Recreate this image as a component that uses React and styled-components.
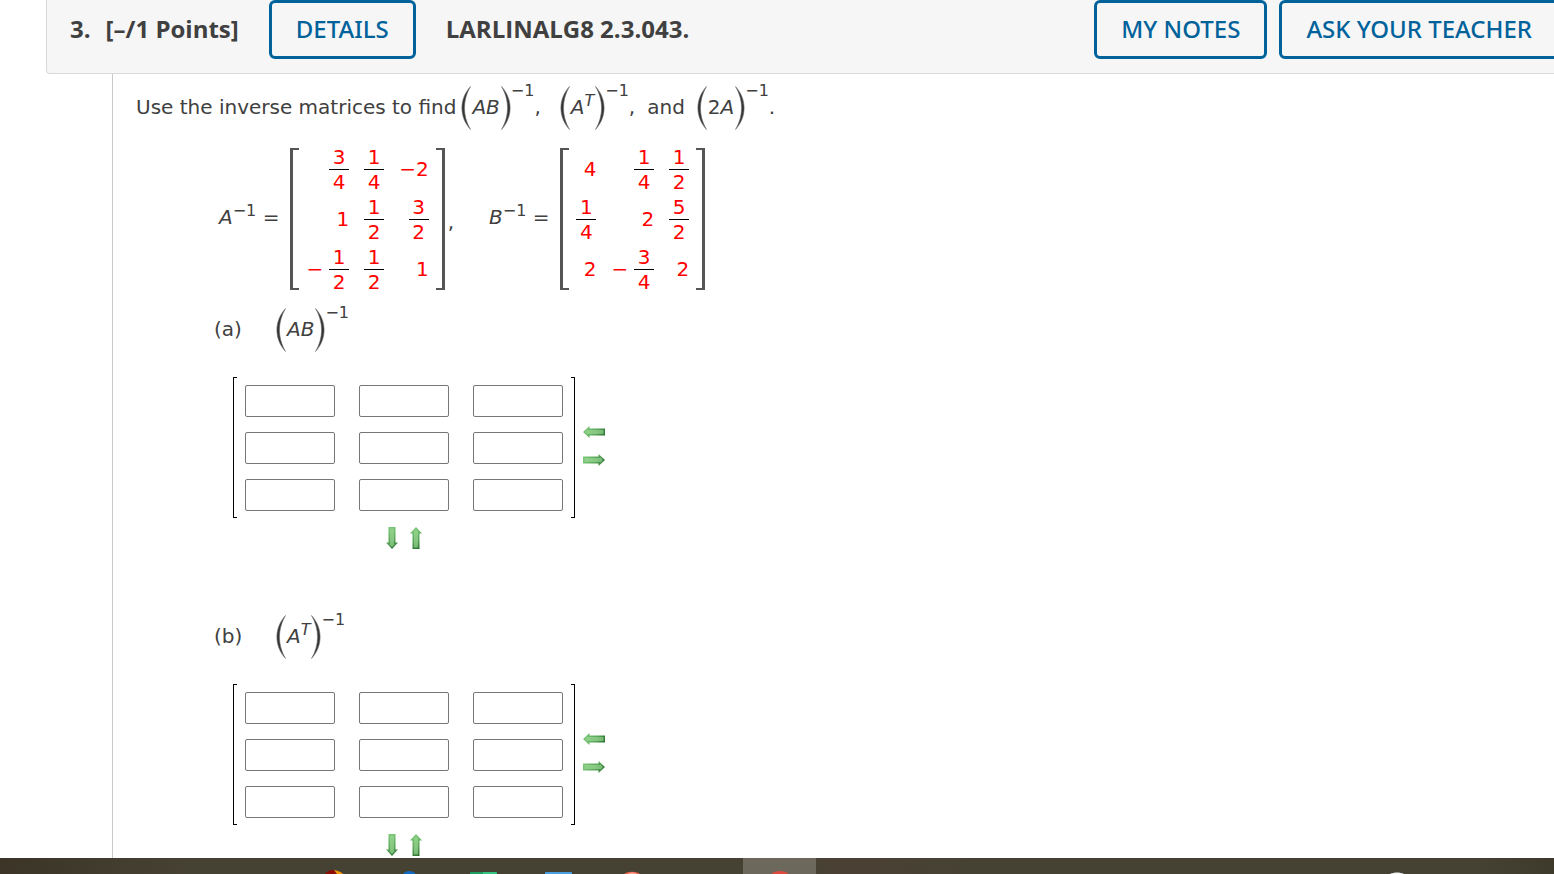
import React from 'react'
import styled, { createGlobalStyle } from 'styled-components'

const matrixA = [
  [['3', '4'], ['1', '4'], '−2'],
  ['1', ['1', '2'], ['3', '2']],
  [['1', '2', '−'], ['1', '2'], '1'],
]

const matrixB = [
  ['4', ['1', '4'], ['1', '2']],
  [['1', '4'], '2', ['5', '2']],
  ['2', ['3', '4', '−'], '2'],
]

const Paren = ({ right }) => (
  <ParenSvg viewBox="0 0 10 44" aria-hidden="true">
    <path
      d={right ? 'M0.5 0.5C12 13 12 31 0.5 43.5C8.5 30 8.5 14 0.5 0.5Z' : 'M9.5 0.5C-2 13 -2 31 9.5 43.5C1.5 30 1.5 14 9.5 0.5Z'}
      fill="#333"
      stroke="#777"
      strokeWidth="0.6"
    />
  </ParenSvg>
)

const Inverse = ({ children }) => (
  <Group>
    <Paren />
    <Inner>{children}</Inner>
    <Paren right />
    <Power>−1</Power>
  </Group>
)

const Cell = ({ value }) => {
  if (!Array.isArray(value)) {
    return <td>{value}</td>
  }
  const [top, bottom, sign] = value
  return (
    <td>
      <Signed>
        {sign && <span>{sign}</span>}
        <Fraction>
          <span>{top}</span>
          <span>{bottom}</span>
        </Fraction>
      </Signed>
    </td>
  )
}

const Matrix = ({ rows }) => (
  <Bracket>
    <MatrixTable>
      <tbody>
        {rows.map((row, i) => (
          <tr key={i}>
            {row.map((value, j) => (
              <Cell key={j} value={value} />
            ))}
          </tr>
        ))}
      </tbody>
    </MatrixTable>
  </Bracket>
)

// the arrow is drawn on its own for each axis so the shading always runs top left to bottom right
const arrowTurns = { left: 180, right: 0, down: 90, up: 270 }

const Arrow = ({ dir, label }) => {
  const vertical = dir === 'up' || dir === 'down'
  const flipped = dir === 'up' || dir === 'left'
  const id = `arrow-${dir}`
  const sign = flipped ? -1 : 1
  return (
    <ArrowButton type="button" aria-label={label} $vertical={vertical}>
      <svg viewBox={vertical ? '-6 -11 12 22' : '-11 -6 22 12'}>
        <defs>
          <linearGradient
            id={id}
            gradientUnits="userSpaceOnUse"
            x1={-11 * sign}
            y1={vertical ? 5 * sign : -5 * sign}
            x2={11 * sign}
            y2={vertical ? -5 * sign : 5 * sign}
          >
            <stop offset="0" stopColor="#7fcb7c" />
            <stop offset="0.6" stopColor="#5aa658" />
            <stop offset="1" stopColor="#256b2a" />
          </linearGradient>
        </defs>
        <g transform={`rotate(${arrowTurns[dir]})`}>
          <path d="M-11 -3.5H4.5V-6L11 0L4.5 6V3.5H-11Z" fill={`url(#${id})`} />
          <path d="M-9.5 -2H6V-3L9 0L6 3V2H-9.5Z" fill="#a2dc9c" opacity="0.6" />
        </g>
      </svg>
    </ArrowButton>
  )
}

const AnswerMatrix = ({ part }) => (
  <Answer>
    <InputGrid>
      {Array.from({ length: 9 }, (_, i) => (
        <Entry
          key={i}
          type="text"
          aria-label={`Part ${part}, row ${Math.floor(i / 3) + 1}, column ${(i % 3) + 1}`}
        />
      ))}
    </InputGrid>
    <ColumnArrows>
      <Arrow dir="left" label="Remove column" />
      <Arrow dir="right" label="Add column" />
    </ColumnArrows>
    <RowArrows>
      <Arrow dir="down" label="Add row" />
      <Arrow dir="up" label="Remove row" />
    </RowArrows>
  </Answer>
)

const App = () => {
  return (
    <Page>
      <GlobalStyle />
      <Content>
        <Header>
          <Title>
            <span>3.</span>
            <span>[–/1 Points]</span>
          </Title>
          <OutlineButton type="button">DETAILS</OutlineButton>
          <Code>LARLINALG8 2.3.043.</Code>
          <Actions>
            <OutlineButton type="button">MY NOTES</OutlineButton>
            <OutlineButton type="button">ASK YOUR TEACHER</OutlineButton>
          </Actions>
        </Header>
        <Question>
          <Statement>
            <Lead>Use the inverse matrices to find</Lead>
            <Inverse><i>AB</i></Inverse>
            <Comma>,</Comma>
            <Inverse><i>A<SmallSup>T</SmallSup></i></Inverse>
            <Comma>,</Comma>
            <And>and</And>
            <Inverse>2<i>A</i></Inverse>
            <span>.</span>
          </Statement>
          <Given>
            <Name><i>A</i><SmallSup>−1</SmallSup> =</Name>
            <Matrix rows={matrixA} />
            <GivenComma>,</GivenComma>
            <Name><i>B</i><SmallSup>−1</SmallSup> =</Name>
            <Matrix rows={matrixB} />
          </Given>
          <Part>
            <PartLine>
              <PartName>(a)</PartName>
              <Inverse><i>AB</i></Inverse>
            </PartLine>
            <AnswerMatrix part="a" />
          </Part>
          <Part>
            <PartLine>
              <PartName>(b)</PartName>
              <Inverse><i>A<SmallSup>T</SmallSup></i></Inverse>
            </PartLine>
            <AnswerMatrix part="b" />
          </Part>
        </Question>
      </Content>
      <Taskbar>
        <Tile>
          <svg viewBox="0 0 32 4">
            <path d="M5 4C8 0 12 0 14 0L17 4Z" fill="#8c0d05" />
            <path d="M14 0C19 1 21 2 23 4H17Z" fill="#f49a12" />
          </svg>
        </Tile>
        <Tile>
          <svg viewBox="0 0 32 4"><path d="M9 4C12 0 18 0 22 4Z" fill="#0f6cc2" /></svg>
        </Tile>
        <Tile>
          <svg viewBox="0 0 32 4">
            <path d="M2 3Q2 2 3 2H15V4H2Z" fill="#1f9e62" />
            <path d="M15 2H28Q29 2 29 3V4H15Z" fill="#35c481" />
          </svg>
        </Tile>
        <Tile>
          <svg viewBox="0 0 32 4"><path d="M3 3Q3 2 4 2H29Q30 2 30 3V4H3Z" fill="#4a9fe0" /></svg>
        </Tile>
        <Tile>
          <svg viewBox="0 0 32 4">
            <path d="M8 4C12 1 20 1 24 4Z" fill="#f0624d" />
            <path d="M12 4C14 2 19 2 21 4Z" fill="#f6a58c" />
          </svg>
        </Tile>
        <Tile />
        <Tile $active>
          <svg viewBox="0 0 32 4"><path d="M7 4C12 0 20 0 25 4Z" fill="#e0493e" /></svg>
        </Tile>
        <Tray>
          <svg viewBox="0 0 32 4"><path d="M9 4C13 2 19 2 23 4Z" fill="#f2f2f2" /></svg>
        </Tray>
      </Taskbar>
    </Page>
  )
}

const GlobalStyle = createGlobalStyle`
  *,
  *::before,
  *::after {
    box-sizing: border-box;
  }
  body {
    margin: 0;
    background: #fff;
    color: #404040;
    font-family: Verdana, 'DejaVu Sans', sans-serif;
    font-size: 20px;
    line-height: 24px;
  }
`

const Page = styled.div`
  display: flex;
  flex-direction: column;
  height: 100vh;
  overflow: hidden;
`

const Content = styled.main`
  flex: 1;
  min-height: 0;
  overflow: hidden;
`

const Header = styled.header`
  display: flex;
  align-items: flex-start;
  margin: 0 -12px 0 46px;
  padding: 0 7px 14px 23px;
  background: #f6f6f6;
  border: solid #d9d9d9;
  border-width: 0 0 1px 1px;
  border-radius: 0 0 0 4px;
  font-family: 'Open Sans', sans-serif;
  font-size: 24px;
  font-weight: 700;
  line-height: 57px;
  white-space: nowrap;
`

const Title = styled.div`
  display: flex;
  gap: 15px;
  margin-right: 30px;
`

const Code = styled.div`
  margin-left: 30px;
`

const Actions = styled.div`
  display: flex;
  gap: 12px;
  margin-left: auto;
`

const OutlineButton = styled.button`
  height: 59px;
  padding: 0 24px 2px;
  border: 3px solid #00629b;
  border-radius: 6px;
  background: transparent;
  color: #00629b;
  font: 500 24px 'Noto Sans', 'Open Sans', sans-serif;
`

const Question = styled.section`
  min-height: 100%;
  margin-left: 112px;
  padding: 11px 0 0 23px;
  border-left: 1px solid #c8c8c8;
`

const Statement = styled.div`
  display: flex;
  align-items: center;
  height: 44px;
`

const Lead = styled.span`
  margin-right: 5px;
`

const Comma = styled.span`
  margin-right: 19px;
`

const And = styled.span`
  margin: 0 12px 0 -7px;
`

const Group = styled.span`
  display: flex;
  align-items: center;
  height: 44px;
`

const ParenSvg = styled.svg`
  width: 10px;
  height: 44px;
  margin-top: 2px;
`

const Inner = styled.span`
  padding: 0 1px;
  white-space: nowrap;
`

const Power = styled.sup`
  align-self: flex-start;
  margin-top: -6px;
  font-size: 16px;
`

const SmallSup = styled.sup`
  font-size: 16px;
  line-height: 0;
  vertical-align: 8px;
`

const Given = styled.div`
  display: flex;
  align-items: center;
  margin: 15px 0 0 83px;
`

const Name = styled.span`
  margin-right: 11px;
  padding-bottom: 4px;
  white-space: nowrap;
`

const GivenComma = styled.span`
  margin: 6px 35px 0 3px;
`

const Bracket = styled.div`
  display: flex;
  position: relative;
  padding: 0 16px;

  &::before,
  &::after {
    content: '';
    position: absolute;
    top: 4px;
    bottom: 4px;
    width: 9px;
    border: solid #555;
  }
  &::before {
    left: 0;
    border-width: 2px 0 2px 3px;
  }
  &::after {
    right: 0;
    border-width: 2px 3px 2px 0;
  }
`

const MatrixTable = styled.table`
  border-collapse: collapse;
  color: #f00;
  text-align: right;

  td {
    height: 50px;
    padding: 0 0 0 15px;
    white-space: nowrap;
  }
  td:first-child {
    padding-left: 0;
  }
`

const Signed = styled.span`
  display: flex;
  align-items: center;
  justify-content: flex-end;
  gap: 6px;
`

const Fraction = styled.span`
  display: inline-flex;
  flex-direction: column;
  width: 20px;
  text-align: center;

  span:first-child {
    border-bottom: 1px solid #000;
  }
`

const Part = styled.div`
  margin: 13px 0 0 78px;
  height: 294px;
`

const PartLine = styled.div`
  display: flex;
  align-items: center;
`

const PartName = styled.span`
  width: 62px;
`

const Answer = styled.div`
  display: inline-grid;
  grid-template-columns: auto auto;
  align-items: center;
  column-gap: 8px;
  row-gap: 9px;
  margin: 26px 0 0 19px;
`

const InputGrid = styled.div`
  display: grid;
  position: relative;
  grid-template-columns: repeat(3, 90px);
  gap: 15px 24px;
  padding: 8px 12px 7px;

  &::before,
  &::after {
    content: '';
    position: absolute;
    top: 0;
    bottom: 0;
    width: 4px;
    border: 1px solid #000;
  }
  &::before {
    left: 0;
    border-right: 0;
  }
  &::after {
    right: 0;
    border-left: 0;
  }
`

const Entry = styled.input`
  width: 90px;
  height: 32px;
  padding: 2px 6px;
  border: 1px solid #767676;
  border-radius: 2px;
  background: #fff;
  font: inherit;
`

const ColumnArrows = styled.div`
  display: flex;
  flex-direction: column;
  gap: 16px;
  padding-bottom: 4px;
`

const RowArrows = styled.div`
  display: flex;
  justify-content: center;
  gap: 12px;
`

const ArrowButton = styled.button`
  display: block;
  width: ${(props) => (props.$vertical ? 12 : 22)}px;
  height: ${(props) => (props.$vertical ? 22 : 12)}px;
  padding: 0;
  border: 0;
  background: none;

  svg {
    display: block;
    width: 100%;
    height: 100%;
  }
`

const Taskbar = styled.footer`
  display: flex;
  flex: none;
  gap: 1px;
  height: 16px;
  padding-left: 299px;
  background: linear-gradient(90deg, #3b3427 0, #464233 12%, #464233 52%, #4b4034 54%, #464233 62%, #464233 95%, #3d3a2c 100%);
`

const Tile = styled.div`
  display: flex;
  align-items: flex-end;
  justify-content: center;
  width: 73px;
  background: ${(props) => (props.$active ? '#6c685c' : 'transparent')};

  svg {
    width: 32px;
    height: 4px;
  }
`

const Tray = styled(Tile)`
  width: 32px;
  margin: 0 141px 0 auto;
`

export default App
